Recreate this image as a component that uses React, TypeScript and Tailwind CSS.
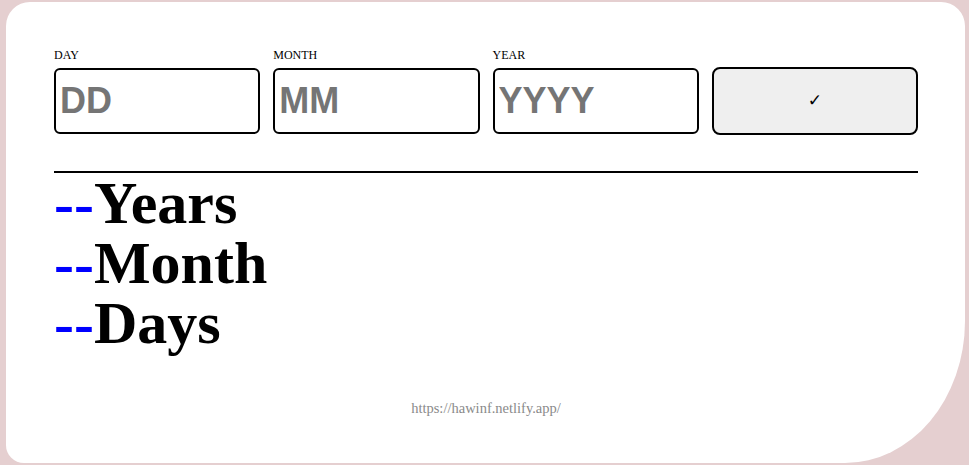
export default function App() {
  const fields = [
    { label: 'DAY', placeholder: 'DD' },
    { label: 'MONTH', placeholder: 'MM' },
    { label: 'YEAR', placeholder: 'YYYY' },
  ];
  const results = ['Years', 'Month', 'Days'];

  return (
    <div className="min-h-screen bg-[#e5cfd0] pl-[6px] pt-[2px]">
      <div className="flex h-[461px] w-[959px] flex-col rounded-tl-[24px] rounded-tr-[24px] rounded-bl-[18px] rounded-br-[120px_142px] bg-white pl-[48px] pr-[47px] pt-[46px] font-['Liberation_Serif',serif]">
        <div className="grid grid-cols-4 items-end gap-[13px]">
          {fields.map((f) => (
            <div key={f.label} className="flex flex-col">
              <label className="mb-[6px] text-[12px] leading-[14px] text-black">{f.label}</label>
              <input
                type="text"
                placeholder={f.placeholder}
                className="h-[66px] w-full rounded-[6px] border-2 border-black px-[4px] font-['Liberation_Sans',sans-serif] text-[36px] font-bold text-black outline-none placeholder:text-[#757575]"
              />
            </div>
          ))}
          <button className="mb-[-1px] h-[68px] rounded-[8px] border-2 border-black bg-[#efefef] font-['DejaVu_Sans',sans-serif] text-[17px] text-black">
            ✓
          </button>
        </div>

        <hr className="mt-[37px] border-t-2 border-black" />

        <div className="flex flex-col">
          {results.map((r) => (
            <div key={r} className="text-[60px] font-bold leading-[60px] text-black">
              <span className="text-[#0000ff]">--</span>
              {r}
            </div>
          ))}
        </div>

        <p className="mt-[45px] text-center text-[14.5px] text-[#8a8a8a]">https://hawinf.netlify.app/</p>
      </div>
    </div>
  );
}
